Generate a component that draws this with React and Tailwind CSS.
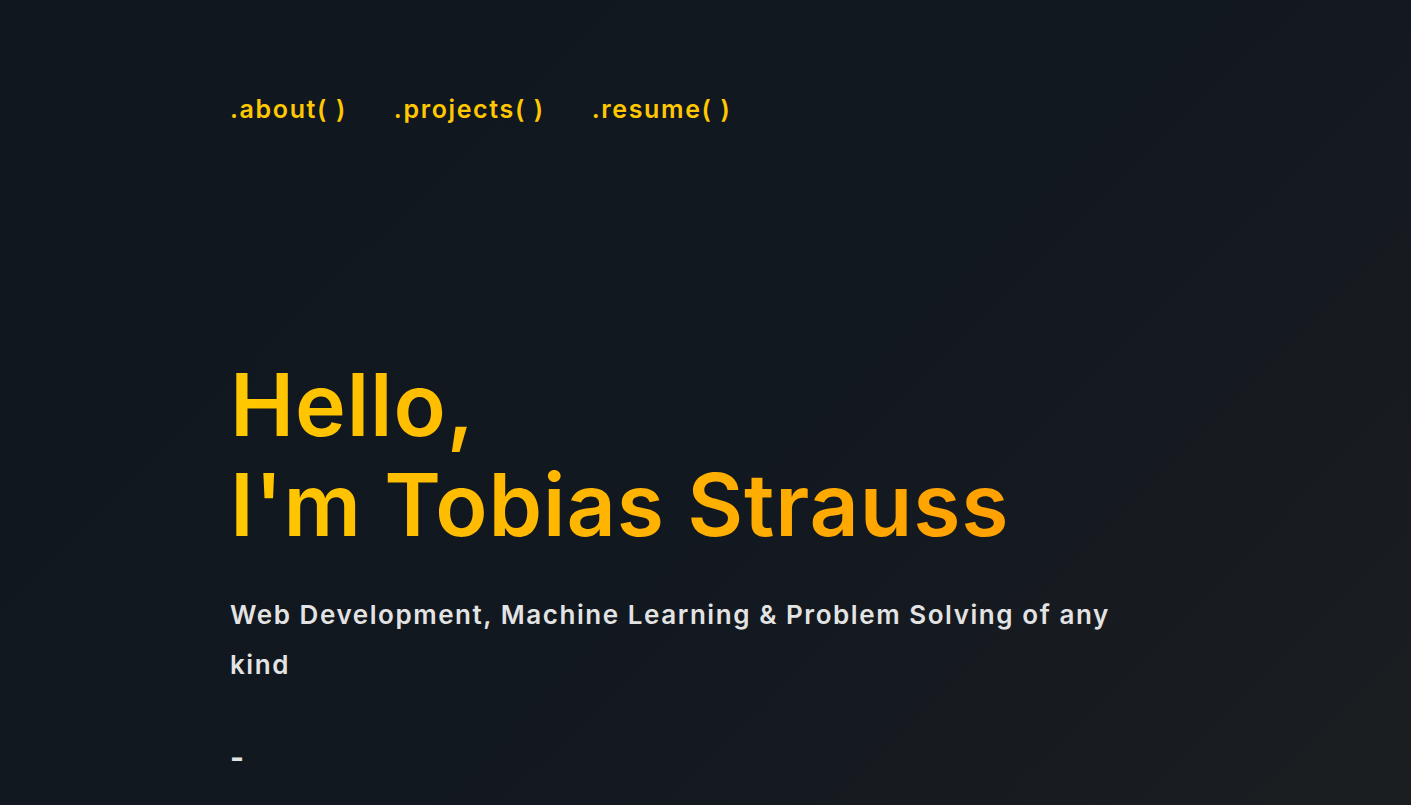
const NAV = ['.about( )', '.projects( )', '.resume( )']

export default function App() {
  return (
    <div className="min-h-screen w-full bg-[linear-gradient(135deg,#11171f_0%,#121820_55%,#1b1e21_100%)] font-['Inter',sans-serif] overflow-hidden">
      <div className="mx-auto max-w-[951px] h-[805px] flex flex-col">
        {/* nav */}
        <nav className="pt-[92px] flex gap-[47px] text-[25px] leading-[34px] font-semibold text-[#ffc800] tracking-[0.065em]">
          {NAV.map((item) => (
            <a key={item} href="#" className="hover:text-[#ffa000]">
              {item}
            </a>
          ))}
        </nav>

        {/* hero */}
        <section className="mt-[229px]">
          <h1 className="text-[86px] leading-[100px] font-semibold tracking-[0.01em] bg-linear-to-r from-[#ffc800] to-[#ffa000] bg-clip-text text-transparent w-fit">
            Hello,
            <br />
            I'm Tobias Strauss
          </h1>
          <p className="mt-[35px] max-w-[900px] text-[26px] leading-[50px] font-semibold text-[#e3e3e3] tracking-[0.06em]">
            Web Development, Machine Learning &amp; Problem Solving of any kind
          </p>
          <p className="mt-[42px] text-[30px] leading-[50px] font-bold text-[#e3e3e3]">-</p>
        </section>
      </div>
    </div>
  )
}
